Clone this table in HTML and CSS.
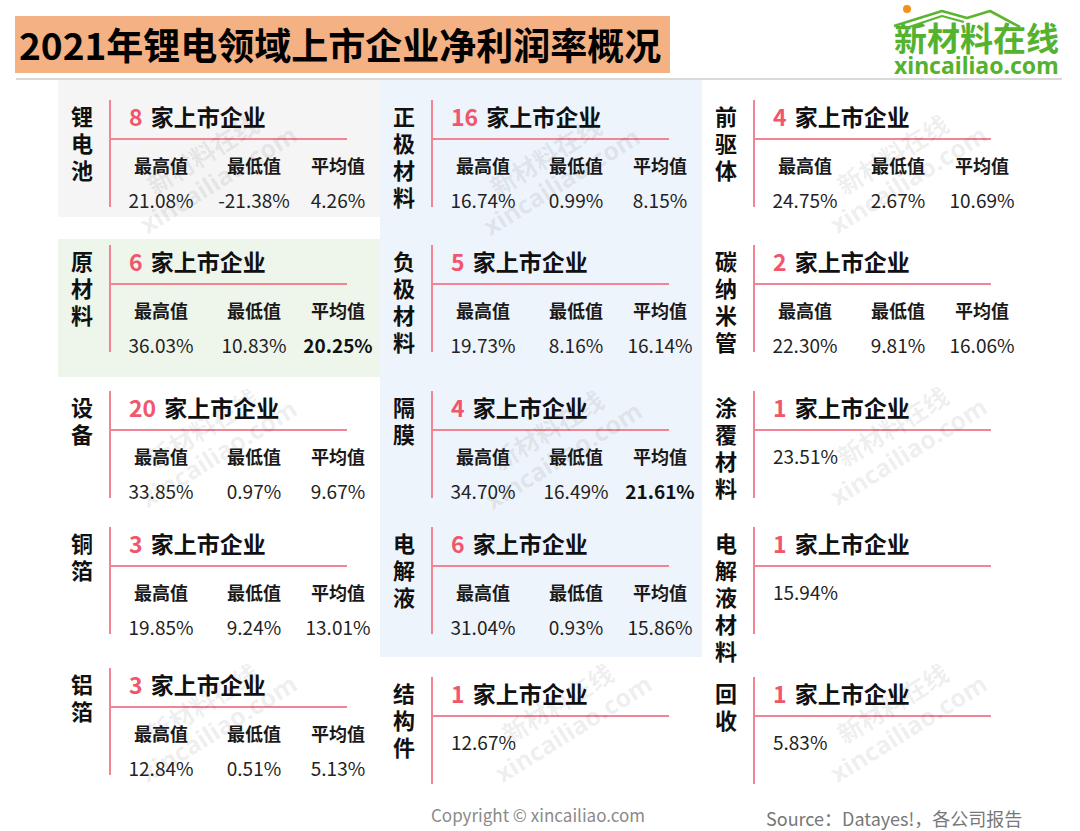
FILE: index.html
```html
<!DOCTYPE html>
<html lang="zh-CN">
<head>
<meta charset="utf-8">
<title>2021年锂电领域上市企业净利润率概况</title>
<link rel="stylesheet" href="styles.css">
</head>
<body>
<div class="page">
  <header class="header">
    <h1 class="title">2021年锂电领域上市企业净利润率概况</h1>
    <div class="logo">
      <svg class="roof" width="170" height="32" viewBox="0 0 170 32">
        <polyline points="2,23 50,8 75,15 98,8 128,24" fill="none" stroke="#5cb531" stroke-width="2.6" stroke-linejoin="round"/>
        <polyline points="14,25 50,13 72,19" fill="none" stroke="#5cb531" stroke-width="2" stroke-linejoin="round"/>
        <circle cx="15" cy="6" r="4" fill="#f39019"/>
      </svg>
      <div class="logo-cn">新材料在线</div>
      <div class="logo-en">xincailiao.com</div>
    </div>
  </header>
  <div class="divider"></div>

  <main class="board">
    <!-- Column 1 -->
    <section class="col">
      <div class="card c1-r1 bg-gray">
        <div class="card-in">
          <div class="label">锂电池</div>
          <div class="body">
            <div class="head"><span class="num">8</span> 家上市企业</div>
            <div class="stats">
              <div class="sh">最高值</div><div class="sh">最低值</div><div class="sh">平均值</div>
              <div class="sv">21.08%</div><div class="sv">-21.38%</div><div class="sv">4.26%</div>
            </div>
          </div>
        </div>
      </div>
      <div class="card c1-r2 bg-green">
        <div class="card-in">
          <div class="label">原材料</div>
          <div class="body">
            <div class="head"><span class="num">6</span> 家上市企业</div>
            <div class="stats">
              <div class="sh">最高值</div><div class="sh">最低值</div><div class="sh">平均值</div>
              <div class="sv">36.03%</div><div class="sv">10.83%</div><div class="sv strong">20.25%</div>
            </div>
          </div>
        </div>
      </div>
      <div class="card c1-r3">
        <div class="card-in">
          <div class="label">设备</div>
          <div class="body">
            <div class="head"><span class="num">20</span> 家上市企业</div>
            <div class="stats">
              <div class="sh">最高值</div><div class="sh">最低值</div><div class="sh">平均值</div>
              <div class="sv">33.85%</div><div class="sv">0.97%</div><div class="sv">9.67%</div>
            </div>
          </div>
        </div>
      </div>
      <div class="card c1-r4">
        <div class="card-in">
          <div class="label">铜箔</div>
          <div class="body">
            <div class="head"><span class="num">3</span> 家上市企业</div>
            <div class="stats">
              <div class="sh">最高值</div><div class="sh">最低值</div><div class="sh">平均值</div>
              <div class="sv">19.85%</div><div class="sv">9.24%</div><div class="sv">13.01%</div>
            </div>
          </div>
        </div>
      </div>
      <div class="card c1-r5">
        <div class="card-in">
          <div class="label">铝箔</div>
          <div class="body">
            <div class="head"><span class="num">3</span> 家上市企业</div>
            <div class="stats">
              <div class="sh">最高值</div><div class="sh">最低值</div><div class="sh">平均值</div>
              <div class="sv">12.84%</div><div class="sv">0.51%</div><div class="sv">5.13%</div>
            </div>
          </div>
        </div>
      </div>
    </section>

    <!-- Column 2 -->
    <section class="col">
      <div class="blue-group">
        <div class="card">
          <div class="card-in">
            <div class="label">正极材料</div>
            <div class="body">
              <div class="head"><span class="num">16</span> 家上市企业</div>
              <div class="stats">
                <div class="sh">最高值</div><div class="sh">最低值</div><div class="sh">平均值</div>
                <div class="sv">16.74%</div><div class="sv">0.99%</div><div class="sv">8.15%</div>
              </div>
            </div>
          </div>
        </div>
        <div class="card r2">
          <div class="card-in">
            <div class="label">负极材料</div>
            <div class="body">
              <div class="head"><span class="num">5</span> 家上市企业</div>
              <div class="stats">
                <div class="sh">最高值</div><div class="sh">最低值</div><div class="sh">平均值</div>
                <div class="sv">19.73%</div><div class="sv">8.16%</div><div class="sv">16.14%</div>
              </div>
            </div>
          </div>
        </div>
        <div class="card r3">
          <div class="card-in">
            <div class="label">隔膜</div>
            <div class="body">
              <div class="head"><span class="num">4</span> 家上市企业</div>
              <div class="stats">
                <div class="sh">最高值</div><div class="sh">最低值</div><div class="sh">平均值</div>
                <div class="sv">34.70%</div><div class="sv">16.49%</div><div class="sv strong">21.61%</div>
              </div>
            </div>
          </div>
        </div>
        <div class="card r4">
          <div class="card-in">
            <div class="label">电解液</div>
            <div class="body">
              <div class="head"><span class="num">6</span> 家上市企业</div>
              <div class="stats">
                <div class="sh">最高值</div><div class="sh">最低值</div><div class="sh">平均值</div>
                <div class="sv">31.04%</div><div class="sv">0.93%</div><div class="sv">15.86%</div>
              </div>
            </div>
          </div>
        </div>
      </div>
      <div class="card c2-r5">
        <div class="card-in">
          <div class="label">结构件</div>
          <div class="body">
            <div class="head"><span class="num">1</span> 家上市企业</div>
            <div class="single">12.67%</div>
          </div>
        </div>
      </div>
    </section>

    <!-- Column 3 -->
    <section class="col col-pad">
      <div class="card">
        <div class="card-in">
          <div class="label">前驱体</div>
          <div class="body">
            <div class="head"><span class="num">4</span> 家上市企业</div>
            <div class="stats">
              <div class="sh">最高值</div><div class="sh">最低值</div><div class="sh">平均值</div>
              <div class="sv">24.75%</div><div class="sv">2.67%</div><div class="sv">10.69%</div>
            </div>
          </div>
        </div>
      </div>
      <div class="card r2">
        <div class="card-in">
          <div class="label">碳纳米管</div>
          <div class="body">
            <div class="head"><span class="num">2</span> 家上市企业</div>
            <div class="stats">
              <div class="sh">最高值</div><div class="sh">最低值</div><div class="sh">平均值</div>
              <div class="sv">22.30%</div><div class="sv">9.81%</div><div class="sv">16.06%</div>
            </div>
          </div>
        </div>
      </div>
      <div class="card r3">
        <div class="card-in">
          <div class="label">涂覆材料</div>
          <div class="body">
            <div class="head"><span class="num">1</span> 家上市企业</div>
            <div class="single">23.51%</div>
          </div>
        </div>
      </div>
      <div class="card r4">
        <div class="card-in">
          <div class="label">电解液材料</div>
          <div class="body">
            <div class="head"><span class="num">1</span> 家上市企业</div>
            <div class="single">15.94%</div>
          </div>
        </div>
      </div>
      <div class="card c3-r5">
        <div class="card-in">
          <div class="label">回收</div>
          <div class="body">
            <div class="head"><span class="num">1</span> 家上市企业</div>
            <div class="single">5.83%</div>
          </div>
        </div>
      </div>
    </section>
  </main>

  <footer class="footer">
    <div class="copy">Copyright © xincailiao.com</div>
    <div class="source">Source：Datayes!，各公司报告</div>
  </footer>

  <div class="wm wm-1"><div class="wm-cn">新材料在线</div><div class="wm-en">xincailiao.com</div></div>
  <div class="wm wm-2"><div class="wm-cn">新材料在线</div><div class="wm-en">xincailiao.com</div></div>
  <div class="wm wm-3"><div class="wm-cn">新材料在线</div><div class="wm-en">xincailiao.com</div></div>
  <div class="wm wm-4"><div class="wm-cn">新材料在线</div><div class="wm-en">xincailiao.com</div></div>
  <div class="wm wm-5"><div class="wm-cn">新材料在线</div><div class="wm-en">xincailiao.com</div></div>
  <div class="wm wm-6"><div class="wm-cn">新材料在线</div><div class="wm-en">xincailiao.com</div></div>
  <div class="wm wm-7"><div class="wm-cn">新材料在线</div><div class="wm-en">xincailiao.com</div></div>
  <div class="wm wm-8"><div class="wm-cn">新材料在线</div><div class="wm-en">xincailiao.com</div></div>
  <div class="wm wm-9"><div class="wm-cn">新材料在线</div><div class="wm-en">xincailiao.com</div></div>
</div>
</body>
</html>
```

FILE: styles.css
```css
* { box-sizing: border-box; }

html, body {
  margin: 0;
  padding: 0;
  background: #ffffff;
}

body {
  font-family: "Noto Sans CJK SC", "Noto Sans", "Liberation Sans", sans-serif;
  color: #1a1a1a;
}

.page {
  position: relative;
  width: 1080px;
  height: 831px;
  overflow: hidden;
}

/* ---------- header ---------- */
.header {
  display: flex;
  justify-content: space-between;
  align-items: flex-start;
  height: 78px;
}

.title {
  margin: 16px 0 0 15px;
  width: 655px;
  height: 57px;
  padding-left: 4px;
  background: #f4b183;
  font-size: 37px;
  line-height: 57px;
  font-weight: 700;
  color: #000;
  white-space: nowrap;
}

.logo {
  position: relative;
  width: 170px;
  margin-right: 16px;
  padding-top: 21px;
  color: #55b22f;
  font-weight: 700;
}

.roof {
  position: absolute;
  left: -2px;
  top: 3px;
}

.logo-cn {
  height: 33px;
  font-size: 33px;
  line-height: 33px;
  white-space: nowrap;
}

.logo-en {
  height: 20px;
  margin-top: 1px;
  font-family: "Noto Sans", "Open Sans", sans-serif;
  font-size: 23px;
  line-height: 20px;
  white-space: nowrap;
}

.divider {
  height: 2px;
  margin: 0 18px 0 16px;
  background: #d9d9d9;
}

/* ---------- board ---------- */
.board {
  display: flex;
  padding-left: 58px;
  height: 704px;
}

.col {
  width: 322px;
  display: flex;
  flex-direction: column;
}

.col-pad { padding-top: 20px; }

.blue-group {
  background: #eef4fb;
  padding: 20px 0 23px;
}

.bg-gray { background: #f5f5f5; }
.bg-green { background: #eef5ea; }

.card { width: 322px; }

.c1-r1 { padding: 20px 0 10px; }
.c1-r2 { margin-top: 22px; padding: 6px 0 25px; }
.c1-r3 { margin-top: 14px; }
.c1-r4 { margin-top: 29px; }
.c1-r5 { margin-top: 34px; }

.r2 { margin-top: 38px; }
.r3 { margin-top: 39px; }
.r4 { margin-top: 29px; }
.c2-r5 { margin-top: 20px; }
.c3-r5 { margin-top: 43px; }

.card-in {
  display: flex;
  height: 107px;
  padding-left: 13px;
}

.label {
  width: 22px;
  flex: none;
  padding-top: 2px;
  font-size: 22px;
  line-height: 27px;
  font-weight: 700;
  color: #111;
  word-break: break-all;
}

.body {
  flex: none;
  width: 238px;
  height: 107px;
  margin-left: 16px;
  border-left: 2px solid #f28494;
}

.head {
  height: 40px;
  padding-left: 18px;
  border-bottom: 2px solid #f28494;
  font-size: 23px;
  line-height: 33px;
  font-weight: 700;
  color: #111;
  white-space: nowrap;
}

.num {
  color: #f0566c;
  margin-right: 3px;
}

.stats {
  display: grid;
  grid-template-columns: 100px 86px 82px;
  grid-template-rows: 34px 36px;
  width: 268px;
  padding-top: 8px;
  text-align: center;
  white-space: nowrap;
}

.sh {
  font-size: 18px;
  line-height: 34px;
  font-weight: 700;
  color: #1a1a1a;
}

.sv {
  font-size: 19px;
  line-height: 36px;
  color: #222;
}

.strong { font-weight: 700; color: #111; }

.single {
  padding: 8px 0 0 18px;
  font-size: 19px;
  line-height: 34px;
  color: #222;
}

/* ---------- footer ---------- */
.footer {
  display: flex;
  margin-top: 16px;
  padding-left: 431px;
  height: 30px;
}

.copy {
  width: 335px;
  font-size: 17px;
  line-height: 30px;
  color: #8a8a8a;
  white-space: nowrap;
}

.source {
  padding-top: 3px;
  font-size: 18px;
  line-height: 30px;
  color: #777;
  white-space: nowrap;
}

/* ---------- watermarks ---------- */
.wm {
  position: absolute;
  transform: translate(-50%, -50%) rotate(-32deg);
  text-align: center;
  font-weight: 700;
  color: rgba(0, 0, 0, 0.08);
  white-space: nowrap;
  pointer-events: none;
}

.wm-cn { font-size: 25px; line-height: 30px; }
.wm-en {
  font-family: "Noto Sans", "Open Sans", sans-serif;
  font-size: 25px;
  line-height: 30px;
}

.wm-1 { left: 210px; top: 166px; }
.wm-2 { left: 553px; top: 168px; }
.wm-3 { left: 900px; top: 166px; }
.wm-4 { left: 210px; top: 440px; }
.wm-5 { left: 555px; top: 442px; }
.wm-6 { left: 900px; top: 438px; }
.wm-7 { left: 210px; top: 715px; }
.wm-8 { left: 565px; top: 715px; }
.wm-9 { left: 900px; top: 715px; }
```
